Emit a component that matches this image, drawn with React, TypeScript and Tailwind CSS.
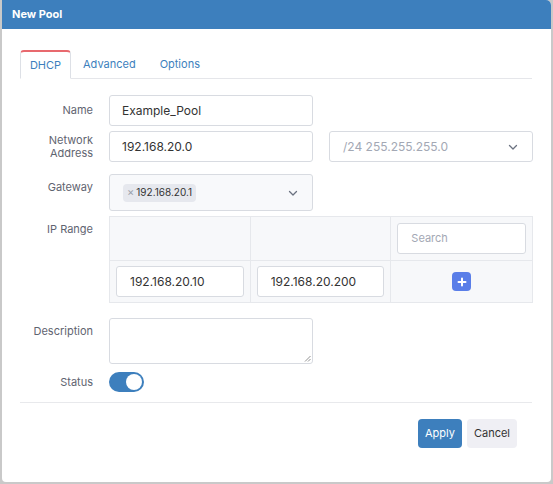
import React from 'react'

const font = { fontFamily: 'Inter, "Noto Sans", sans-serif' }

const Chevron: React.FC = () => (
  <svg width="12" height="12" viewBox="0 0 12 12" fill="none" stroke="#6b7280" strokeWidth="1.3" strokeLinecap="round" strokeLinejoin="round">
    <path d="M2.5 4.5 6 8l3.5-3.5" />
  </svg>
)

const Label: React.FC<{ children: React.ReactNode; className?: string }> = ({ children, className }) => (
  <div className={`w-[73px] shrink-0 text-right text-[11px] leading-[13px] text-[#5f6470] ${className ?? ''}`}>{children}</div>
)

const App: React.FC = () => {
  return (
    <div className="w-[553px] h-[484px] bg-[#c9c9c9] pl-[2px] pr-[2px] pb-[2px]" style={font}>
      <div className="h-full bg-white rounded-tr-[5px] rounded-b-[4px] overflow-hidden flex flex-col">
        {/* Header */}
        <div className="h-[29px] bg-[#3d7fbd] flex items-center px-[10px] shrink-0">
          <span className="text-white text-[11px] font-bold">New Pool</span>
        </div>

        <div className="px-[18px] pt-[21px]">
          {/* Tabs */}
          <div className="flex border-b border-[#e5e6ea] h-[29px] w-[512px]">
            <div className="w-[51px] h-[29px] -mb-px bg-white border border-[#dde0e6] border-b-white border-t-2 border-t-[#e8696e] rounded-t-[4px] flex items-center justify-center text-[11px] text-[#3d7fbd]">
              DHCP
            </div>
            <div className="px-[12px] flex items-center text-[11px] text-[#3d7fbd]">Advanced</div>
            <div className="px-[12px] flex items-center text-[11px] text-[#3d7fbd]">Options</div>
          </div>

          {/* Form */}
          <div className="flex flex-col mt-[16px]">
            <div className="flex gap-[16px] items-center">
              <Label>Name</Label>
              <div className="w-[204px] h-[31px] border border-[#d8dbe1] rounded-[3px] flex items-center px-[12px] text-[12px] text-[#333]">
                Example_Pool
              </div>
            </div>

            <div className="flex gap-[16px] items-center mt-[5px]">
              <Label className="text-[10px] leading-[12px]">Network<br />Address</Label>
              <div className="w-[204px] h-[31px] border border-[#d8dbe1] rounded-[3px] flex items-center px-[12px] text-[12px] text-[#333]">
                192.168.20.0
              </div>
              <div className="w-[204px] h-[31px] border border-[#d8dbe1] rounded-[3px] flex items-center justify-between pl-[13px] pr-[13px] text-[12px] text-[#a3a8b4]">
                <span>/24 255.255.255.0</span>
                <Chevron />
              </div>
            </div>

            <div className="flex gap-[16px] mt-[12px]">
              <Label className="pt-[7px]">Gateway</Label>
              <div className="w-[204px] h-[37px] border border-[#d8dbe1] rounded-[3px] bg-[#f8f9fb] flex items-center justify-between pl-[13px] pr-[13px]">
                <span className="flex items-center gap-[2px] bg-[#e6e8ee] rounded-[4px] h-[18px] px-[4px] text-[10px] text-[#333]">
                  <span className="text-[#9aa0ab] text-[11px]">×</span>192.168.20.1
                </span>
                <Chevron />
              </div>
            </div>

            <div className="flex gap-[16px] mt-[5px]">
              <Label className="pt-[7px]">IP Range</Label>
              <div className="w-[424px] border border-[#e6e8ec] bg-[#f7f8fa] grid grid-cols-3">
                <div className="h-[44px] border-r border-b border-[#e6e8ec]" />
                <div className="h-[44px] border-r border-b border-[#e6e8ec]" />
                <div className="h-[44px] border-b border-[#e6e8ec] flex items-center px-[6px]">
                  <div className="w-full h-[31px] bg-white border border-[#d8dbe1] rounded-[3px] flex items-center px-[13px] text-[11px] text-[#a3a8b4]">
                    Search
                  </div>
                </div>
                <div className="h-[41px] border-r border-[#e6e8ec] flex items-center px-[6px]">
                  <div className="w-full h-[31px] bg-white border border-[#d8dbe1] rounded-[3px] flex items-center px-[13px] text-[12px] text-[#333]">
                    192.168.20.10
                  </div>
                </div>
                <div className="h-[41px] border-r border-[#e6e8ec] flex items-center px-[6px]">
                  <div className="w-full h-[31px] bg-white border border-[#d8dbe1] rounded-[3px] flex items-center px-[13px] text-[12px] text-[#333]">
                    192.168.20.200
                  </div>
                </div>
                <div className="h-[41px] flex items-center justify-center">
                  <div className="w-[19px] h-[19px] rounded-[4px] bg-[#5a7ee8] flex items-center justify-center">
                    <svg width="10" height="10" viewBox="0 0 10 10" stroke="white" strokeWidth="2" strokeLinecap="round">
                      <path d="M5 1.5v7M1.5 5h7" />
                    </svg>
                  </div>
                </div>
              </div>
            </div>

            <div className="flex gap-[16px] mt-[15px]">
              <Label className="pt-[7px]">Description</Label>
              <div className="relative w-[204px] h-[46px] border border-[#d8dbe1] rounded-[3px]">
                <svg className="absolute right-[1px] bottom-[1px]" width="7" height="7" viewBox="0 0 7 7" stroke="#777" strokeWidth="0.8">
                  <path d="M6.5 1 1 6.5M6.5 4 4 6.5" />
                </svg>
              </div>
            </div>

            <div className="flex gap-[16px] items-center mt-[8px]">
              <Label>Status</Label>
              <div className="w-[35px] h-[20px] rounded-full bg-[#3d7fbd] flex items-center justify-end pr-[2px]">
                <div className="w-[16px] h-[16px] rounded-full bg-white" />
              </div>
            </div>
          </div>

          <div className="w-[512px] border-t border-[#e8e9ec] mt-[10px]" />

          <div className="w-[512px] flex justify-end gap-[5px] mt-[16px] pr-[15px]">
            <button className="h-[29px] px-[7px] rounded-[4px] bg-[#3d7fbd] text-white text-[11px]">Apply</button>
            <button className="h-[29px] px-[7px] rounded-[4px] bg-[#efeff4] text-[#333] text-[11px]">Cancel</button>
          </div>
        </div>
      </div>
    </div>
  )
}

export default App
